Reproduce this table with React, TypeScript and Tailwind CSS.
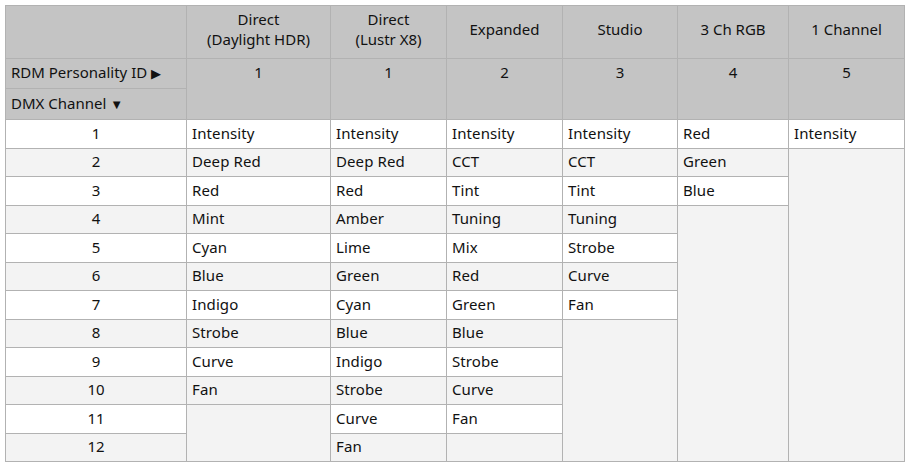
const columns = [
  { name: ['Direct', '(Daylight HDR)'], id: 1 },
  { name: ['Direct', '(Lustr X8)'], id: 1 },
  { name: ['Expanded'], id: 2 },
  { name: ['Studio'], id: 3 },
  { name: ['3 Ch RGB'], id: 4 },
  { name: ['1 Channel'], id: 5 },
];

const channels: string[][] = [
  ['Intensity', 'Deep Red', 'Red', 'Mint', 'Cyan', 'Blue', 'Indigo', 'Strobe', 'Curve', 'Fan'],
  ['Intensity', 'Deep Red', 'Red', 'Amber', 'Lime', 'Green', 'Cyan', 'Blue', 'Indigo', 'Strobe', 'Curve', 'Fan'],
  ['Intensity', 'CCT', 'Tint', 'Tuning', 'Mix', 'Red', 'Green', 'Blue', 'Strobe', 'Curve', 'Fan'],
  ['Intensity', 'CCT', 'Tint', 'Tuning', 'Strobe', 'Curve', 'Fan'],
  ['Red', 'Green', 'Blue'],
  ['Intensity'],
];

const widths = [181, 144, 116, 116, 115, 111, 116];
const ROWS = 12;

function rowBg(i: number) {
  return i % 2 === 0 ? 'bg-white' : 'bg-[#f3f3f3]';
}

export default function App() {
  return (
    <div className="p-[5px] font-['Noto_Sans',sans-serif] text-[15px] text-[#111]">
      <table className="border-collapse table-fixed w-[899px]">
        <colgroup>
          {widths.map((w, i) => (
            <col key={i} style={{ width: w }} />
          ))}
        </colgroup>
        <thead>
          <tr className="h-[53px] bg-[#c4c4c4]">
            <th className="border border-[#b2b2b2]" />
            {columns.map((c, i) => (
              <th key={i} className="border border-[#b2b2b2] font-normal leading-[20px] text-center pb-[6px]">
                {c.name.map((n) => (
                  <div key={n}>{n}</div>
                ))}
              </th>
            ))}
          </tr>
          <tr className="h-[30px] bg-[#c4c4c4]">
            <th className="border border-[#b2b2b2] font-normal text-left pl-[5px] pb-[3px]">
              RDM Personality ID <span className="text-[13px]">▶</span>
            </th>
            {columns.map((c, i) => (
              <th
                key={i}
                rowSpan={2}
                className="border border-[#b2b2b2] font-normal text-center align-top pt-[2px]"
              >
                {c.id}
              </th>
            ))}
          </tr>
          <tr className="h-[31px] bg-[#c4c4c4]">
            <th className="border border-[#b2b2b2] font-normal text-left pl-[5px] pb-[2px]">
              DMX Channel <span className="text-[13px]">▼</span>
            </th>
          </tr>
        </thead>
        <tbody>
          {Array.from({ length: ROWS }, (_, r) => (
            <tr key={r} className={`h-[28.5px] ${rowBg(r)}`}>
              <td className="border border-[#b2b2b2] text-center py-0 pb-[2px] leading-[20px]">{r + 1}</td>
              {channels.map((list, c) => {
                if (r < list.length) {
                  return (
                    <td key={c} className="border border-[#b2b2b2] px-[5px] py-0 pb-[2px] leading-[20px] tracking-[0.1px]">
                      {list[r]}
                    </td>
                  );
                }
                if (r === list.length) {
                  return (
                    <td
                      key={c}
                      rowSpan={ROWS - list.length}
                      className="border border-[#b2b2b2] bg-[#f3f3f3]"
                    />
                  );
                }
                return null;
              })}
            </tr>
          ))}
        </tbody>
      </table>
    </div>
  );
}
